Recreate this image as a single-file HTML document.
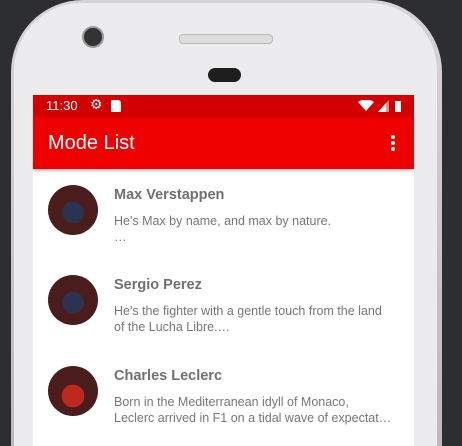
<!DOCTYPE html>
<html style="overflow:hidden;height:446px"><head><style>
html,body{margin:0;width:462px;height:446px;overflow:hidden}
body{background:#2d2e30;position:relative;font-family:"Liberation Sans",sans-serif}
.phone{position:absolute;left:11px;top:0;width:431px;height:446px;border-radius:72px 72px 0 0;background:linear-gradient(#d8d4d6,#bdb8bb);}
.inner{position:absolute;left:14px;top:3px;width:423px;height:443px;border-radius:68px 68px 0 0;background:#ececee}
.screen{position:absolute;left:33px;top:95px;width:381px;height:351px;background:#fff;overflow:hidden}
.status{height:22px;background:#d20000;color:#fff;font-size:13px;position:relative}
.bar{height:52px;background:#ee0000;color:#fff;font-size:20px;position:relative;box-shadow:0 2px 3px rgba(0,0,0,.25)}
.item{position:absolute;left:0;width:381px}
.av{position:absolute;left:15px;width:50px;height:50px;border-radius:50%;background:radial-gradient(circle at 50% 55%,#2a3350 0 28%,#4a1c1c 30%)}
.name{position:absolute;left:81px;font-size:14.5px;font-weight:bold;color:#707070}
.desc{position:absolute;left:81px;font-size:12.5px;color:#777;line-height:16px;width:290px}
</style></head><body>
<div class="phone"></div><div class="inner"></div>
<div style="position:absolute;left:84px;top:28px;width:18px;height:18px;border-radius:50%;background:#333;box-shadow:0 0 0 2px #999"></div>
<div style="position:absolute;left:179px;top:34px;width:92px;height:8px;border-radius:4px;background:#ddd;border:1px solid #bbb"></div>
<div style="position:absolute;left:208px;top:68px;width:33px;height:14px;border-radius:7px;background:#1e1e1e"></div>
<div class="screen">
 <div class="status"><span style="position:absolute;left:13px;top:3px">11:30</span>
 <span style="position:absolute;left:57px;top:1px;font-size:14px">⚙</span>
 <span style="position:absolute;left:78px;top:5px;width:10px;height:12px;background:#fff;border-radius:1px 3px 1px 1px"></span>
 <svg style="position:absolute;left:325px;top:5px" width="45" height="13"><path d="M0 2 Q8 -3 16 2 L8 11Z" fill="#fff"/><path d="M20 12 L28 3 L28 12Z" fill="#fff"/><path d="M28 3 L31 0 L31 12 L28 12Z" fill="#f88"/><rect x="37" y="1" width="6" height="11" fill="#fff"/></svg></div>
 <div class="bar"><span style="position:absolute;left:15px;top:15px">Mode List</span>
 <svg style="position:absolute;left:357px;top:17px" width="6" height="18"><circle cx="3" cy="3" r="2" fill="#fff"/><circle cx="3" cy="9" r="2" fill="#fff"/><circle cx="3" cy="15" r="2" fill="#fff"/></svg></div>
 <div class="item" style="top:90px"><div class="av"></div><div class="name" style="top:2px">Max Verstappen</div><div class="desc" style="top:28px">He's Max by name, and max by nature.<br>…</div></div>
 <div class="item" style="top:180px"><div class="av"></div><div class="name" style="top:2px">Sergio Perez</div><div class="desc" style="top:28px">He's the fighter with a gentle touch from the land<br>of the Lucha Libre.…</div></div>
 <div class="item" style="top:271px"><div class="av" style="background:radial-gradient(circle at 50% 60%,#c0281e 0 28%,#4a1c1c 30%)"></div><div class="name" style="top:2px">Charles Leclerc</div><div class="desc" style="top:28px">Born in the Mediterranean idyll of Monaco,<br>Leclerc arrived in F1 on a tidal wave of expectat…</div></div>
</div>
</body></html>
